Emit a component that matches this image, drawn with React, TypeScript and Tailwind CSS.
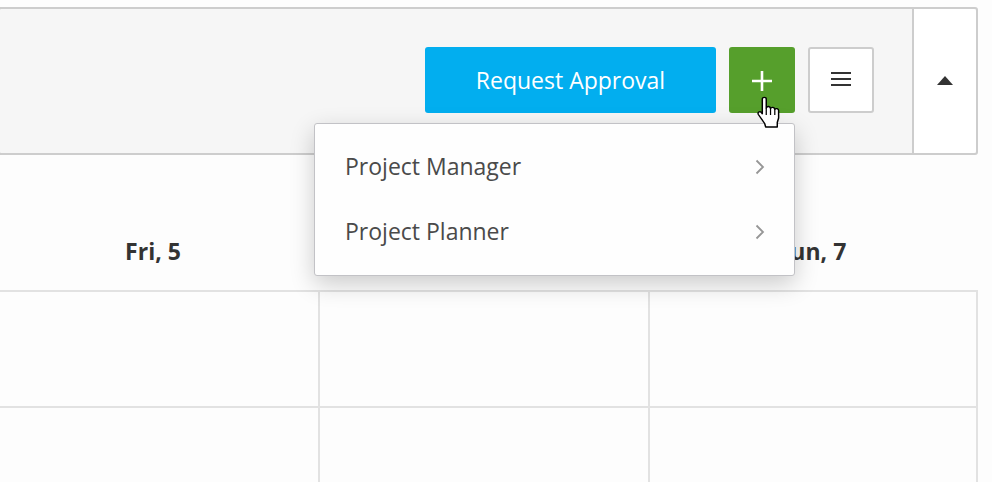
import React from 'react';

const days = ['Fri, 5', '', 'Sun, 7'];

const HandCursor: React.FC = () => (
    <svg className="absolute left-[755px] top-[94px]" width="27" height="35" viewBox="0 0 24 35" preserveAspectRatio="none">
        <path
            d="M6.5 5 C6.5 2.8 10 2.8 10 5 L10 14 C10.8 11.8 13.6 12 13.8 14.5 C14.6 12.6 17.4 13 17.6 15.4 C18.6 14 21 14.6 21 16.6 L21 24 L19.8 28.5 L19.8 33 L9.5 33 L8.6 29.5 L3 20.5 C2 18.4 4.2 16.8 5.6 18.4 L6.5 19.8 Z"
            fill="#fff"
            stroke="#000"
            strokeWidth="1.3"
            strokeLinejoin="round"
        />
        <path d="M10 14 L10 21 M13.8 14.5 L13.8 21 M17.6 15.4 L17.6 21" stroke="#000" strokeWidth="1.1" fill="none" />
    </svg>
);

const MenuItem: React.FC<{ label: string }> = ({ label }) => (
    <div className="h-[65px] flex items-center justify-between pl-[30px] pr-[29px]">
        <span className="text-[23px] text-[#4a4a4a] mb-[3px]">{label}</span>
        <svg width="10" height="16" viewBox="0 0 10 16" fill="none" className="mb-[2px]">
            <path d="M1.5 1.5 L8 8 L1.5 14.5" stroke="#969696" strokeWidth="1.8" />
        </svg>
    </div>
);

const App: React.FC = () => {
    return (
        <div className="relative w-[992px] h-[482px] overflow-hidden bg-[#fdfdfd] text-[#333] font-['Open_Sans',sans-serif]">
            <div className="pt-[7px] pr-[14px] ml-[-2px]">
                <div className="h-[148px] flex justify-end bg-[#f6f6f6] border-2 border-[#cdcdcd] rounded-[3px]">
                    <div className="flex items-center gap-[13px] pr-[38px] pb-[2px]">
                        <button className="w-[291px] h-[66px] bg-[#02aeef] text-white text-[23px] rounded-[3px]">Request Approval</button>
                        <button className="w-[66px] h-[66px] flex items-center justify-center bg-[#569f2c] rounded-[3px]">
                            <svg width="20" height="20" viewBox="0 0 20 20" className="mt-[2px]">
                                <path d="M10 0 V20 M0 10 H20" stroke="#fff" strokeWidth="2.6" />
                            </svg>
                        </button>
                        <button className="w-[66px] h-[66px] flex items-center justify-center bg-white border-2 border-[#cdcdcd] rounded-[3px]">
                            <svg width="20" height="16" viewBox="0 0 20 16" className="mb-[3px]">
                                <path d="M0 2 H20 M0 8 H20 M0 14 H20" stroke="#333" strokeWidth="2" />
                            </svg>
                        </button>
                    </div>
                    <div className="w-[64px] flex items-center justify-center bg-white border-l-2 border-[#cdcdcd] rounded-r-[3px]">
                        <div className="mb-[2px] w-0 h-0 border-l-[8px] border-r-[8px] border-b-[9px] border-l-transparent border-r-transparent border-b-[#333]" />
                    </div>
                </div>
            </div>

            <div className="ml-[-10px] mr-[14px]">
                <div className="grid grid-cols-[330px_330px_328px] h-[135px] items-end">
                    {days.map((day, i) => (
                        <div key={i} className="pb-[23px] pr-[4px] text-center text-[23px] leading-[32px] font-bold text-[#333]">{day}</div>
                    ))}
                </div>
                {[116, 115].map((height, i) => (
                    <div key={i} className={`grid grid-cols-[330px_330px_328px] border-t-2 border-[#e2e2e2] ${i === 0 ? 'h-[116px]' : 'h-[115px]'}`}>
                        <div className="border-r-2 border-[#e2e2e2]" />
                        <div className="border-r-2 border-[#e2e2e2]" />
                        <div className="border-r-2 border-[#e2e2e2]" />
                    </div>
                ))}
            </div>

            <div className="absolute left-[314px] top-[123px] w-[481px] h-[153px] py-[11px] bg-[#fefefe] border border-[#c2c2c6] rounded-[3px] shadow-[0_8px_24px_rgba(0,0,0,0.2)]">
                <MenuItem label="Project Manager" />
                <MenuItem label="Project Planner" />
            </div>

            <HandCursor />
        </div>
    );
};

export default App;
